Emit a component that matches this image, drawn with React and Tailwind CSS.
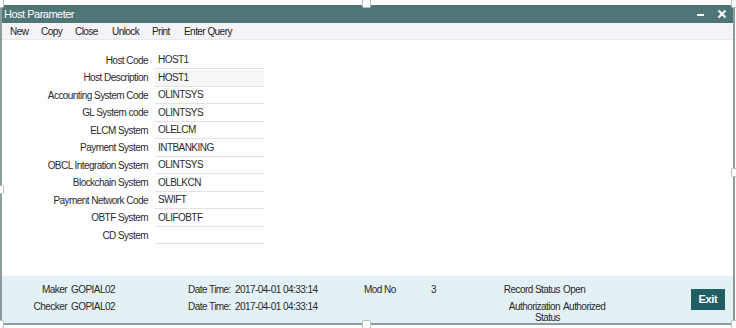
import React from "react";

const fields = [
  ["Host Code", "HOST1", false],
  ["Host Description", "HOST1", true],
  ["Accounting System Code", "OLINTSYS", false],
  ["GL System code", "OLINTSYS", false],
  ["ELCM System", "OLELCM", false],
  ["Payment System", "INTBANKING", false],
  ["OBCL Integration System", "OLINTSYS", false],
  ["Blockchain System", "OLBLKCN", false],
  ["Payment Network Code", "SWIFT", false],
  ["OBTF System", "OLIFOBTF", false],
  ["CD System", "", false],
];

function Handle({ className }) {
  return (
    <div
      className={`absolute w-[9px] h-[9px] bg-white border border-[#b8c2c2] rounded-[2px] ${className}`}
    />
  );
}

export default function App() {
  return (
    <div className="relative w-[736px] h-[328px] bg-white overflow-hidden font-['Liberation_Sans',Arial,sans-serif] text-[10px] tracking-[-0.55px] text-[#2b2b2b] whitespace-nowrap">
      <div className="pt-[5px]">
        <div className="w-[735px] h-[320px] flex flex-col border-l-2 border-r-2 border-b-2 border-[#8e9c9c]">
          {/* Title bar */}
          <div className="h-[18px] bg-[#4e7677] flex items-center justify-between pl-[2px] pr-[6px] text-white">
            <span className="text-[11px] tracking-[-0.5px] leading-none">Host Parameter</span>
            <div className="flex items-center gap-[13px]">
              <span className="w-[7px] h-[2px] bg-white mt-[2px]" />
              <svg width="10" height="10" viewBox="0 0 10 10">
                <path d="M1.5 1.5 L8.5 8.5 M8.5 1.5 L1.5 8.5" stroke="white" strokeWidth="2" />
              </svg>
            </div>
          </div>
          {/* Menu bar */}
          <div className="h-[17px] bg-[#f4f3f7] border-b border-[#e8e8ec] flex items-center pl-[8px] pt-[1px] text-[#222]">
            <span className="leading-none w-[31px]">New</span>
            <span className="leading-none w-[34px]">Copy</span>
            <span className="leading-none w-[37px]">Close</span>
            <span className="leading-none w-[40px]">Unlock</span>
            <span className="leading-none w-[32px]">Print</span>
            <span className="leading-none">Enter Query</span>
          </div>
          {/* Content */}
          <div className="flex-1 pt-[12px]">
            {fields.map(([label, value, ro]) => (
              <div key={label} className="flex h-[17.5px] items-center">
                <div className="w-[146px] text-right leading-none">{label}</div>
                <div
                  className={`ml-[7px] w-[109px] h-[17px] flex items-center pl-[3px] border-b border-[#e2e2e2] ${
                    ro ? "bg-[#f6f6f6]" : "bg-white"
                  }`}
                >
                  <span className="leading-none">{value}</span>
                </div>
              </div>
            ))}
          </div>
          {/* Footer */}
          <div className="h-[47px] bg-[#e3f0f4] flex items-start justify-between pr-[8px]">
            <div className="flex flex-col pt-[7px] gap-[5px]">
              <div className="flex leading-[13px]">
                <span className="w-[65px] text-right">Maker</span>
                <span className="ml-[4px] w-[117px]">GOPIAL02</span>
                <span className="w-[47px]">Date Time:</span>
                <span className="w-[129px]">2017-04-01 04:33:14</span>
                <span className="w-[67px]">Mod No</span>
                <span className="w-[49px]">3</span>
                <span className="w-[80px] text-right">Record Status</span>
                <span className="ml-[3px]">Open</span>
              </div>
              <div className="flex leading-[12px] items-start">
                <span className="w-[65px] text-right">Checker</span>
                <span className="ml-[4px] w-[117px]">GOPIAL02</span>
                <span className="w-[47px]">Date Time:</span>
                <span className="w-[129px]">2017-04-01 04:33:14</span>
                <span className="w-[67px]"></span>
                <span className="w-[49px]"></span>
                <span className="w-[80px] text-right leading-[11px] whitespace-normal">
                  Authorization
                  <br />
                  Status
                </span>
                <span className="ml-[3px]">Authorized</span>
              </div>
            </div>
            <button className="self-center w-[34px] h-[21px] bg-[#1f5e63] text-white font-bold text-[11px] tracking-[-0.3px] leading-none flex items-center justify-center">
              Exit
            </button>
          </div>
        </div>
      </div>
      {/* resize handles */}
      <Handle className="left-[-5px] top-[-1px]" />
      <Handle className="left-[362px] top-[-1px]" />
      <Handle className="left-[731px] top-[-1px]" />
      <Handle className="left-[-5px] top-[185px]" />
      <Handle className="left-[731px] top-[168px]" />
      <Handle className="left-[-5px] top-[320px]" />
      <Handle className="left-[362px] top-[320px]" />
      <Handle className="left-[731px] top-[320px]" />
    </div>
  );
}
